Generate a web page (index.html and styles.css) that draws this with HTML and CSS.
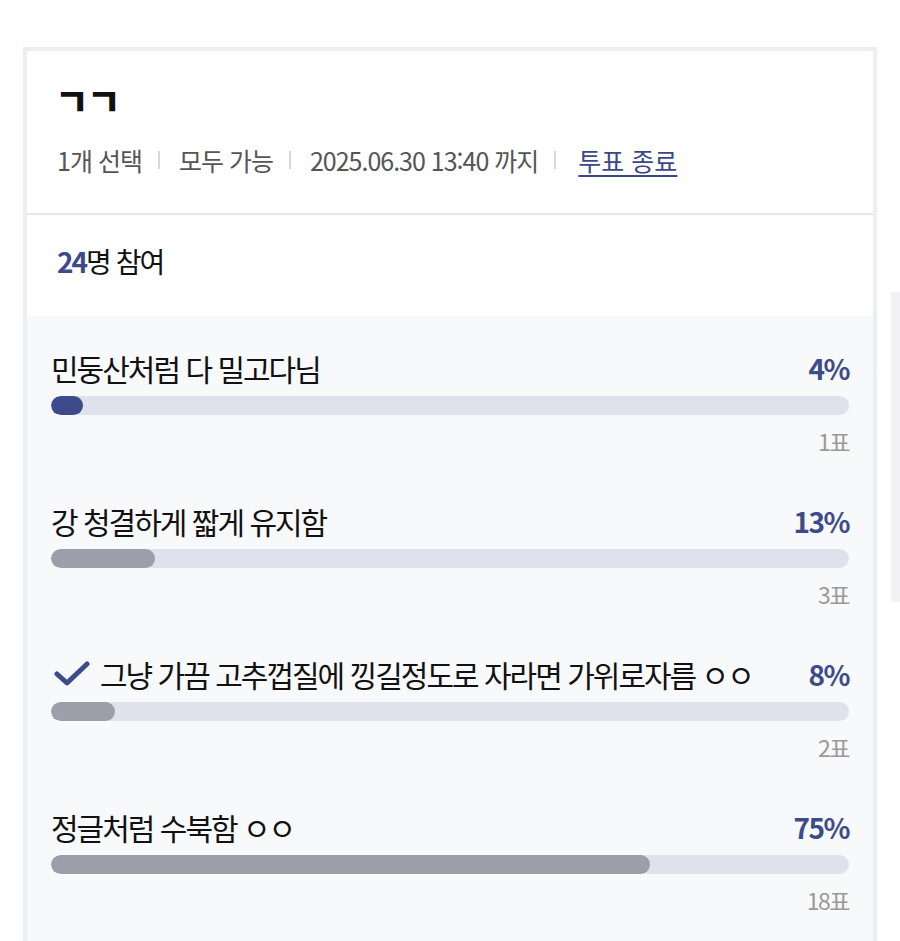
FILE: index.html
```html
<!DOCTYPE html>
<html lang="ko">
<head>
<meta charset="utf-8">
<title>투표</title>
<link rel="stylesheet" href="styles.css">
</head>
<body>
<div class="page">
  <div class="card">
    <div class="head">
      <h2 class="title">ㄱㄱ</h2>
      <div class="meta">
        <span>1개 선택</span><i class="sep"></i><span>모두 가능</span><i class="sep"></i><span>2025.06.30 13:40 까지</span><i class="sep"></i><a class="end">투표 종료</a>
      </div>
    </div>
    <div class="joined"><b>24</b>명 참여</div>
    <div class="options">
      <div class="opt">
        <div class="opt-top"><span class="label">민둥산처럼 다 밀고다님</span><span class="pct">4%</span></div>
        <div class="track"><div class="fill navy" style="width:4%"></div></div>
        <div class="votes">1표</div>
      </div>
      <div class="opt">
        <div class="opt-top"><span class="label">강 청결하게 짧게 유지함</span><span class="pct">13%</span></div>
        <div class="track"><div class="fill" style="width:13%"></div></div>
        <div class="votes">3표</div>
      </div>
      <div class="opt">
        <div class="opt-top"><span class="label"><svg class="check" viewBox="0 0 36 26" width="36" height="26"><path d="M3 13 L13 22 L33 3" fill="none" stroke="#3d4a8c" stroke-width="5" stroke-linecap="round" stroke-linejoin="round"/></svg>그냥 가끔 고추껍질에 낑길정도로 자라면 가위로자름 ㅇㅇ</span><span class="pct">8%</span></div>
        <div class="track"><div class="fill" style="width:8%"></div></div>
        <div class="votes">2표</div>
      </div>
      <div class="opt">
        <div class="opt-top"><span class="label">정글처럼 수북함 ㅇㅇ</span><span class="pct">75%</span></div>
        <div class="track"><div class="fill" style="width:75%"></div></div>
        <div class="votes">18표</div>
      </div>
    </div>
  </div>
  <div class="side"></div>
</div>
</body>
</html>
```
FILE: styles.css
```css
html, body {
  margin: 0;
  padding: 0;
  overflow: hidden;
  background: #ffffff;
}
body {
  font-family: "Noto Sans CJK KR", "Noto Sans", sans-serif;
  color: #111111;
}
.page {
  display: flex;
  align-items: flex-start;
  padding: 47px 0 0 23px;
  width: 1200px;
}
.card {
  flex: none;
  width: 846px;
  border: 4px solid #eceef3;
  border-bottom: none;
  min-height: 1000px;
  background: #f8f9fb;
}
.head {
  background: #fff;
  padding: 29px 30px 36px;
  border-bottom: 2px solid #e6e7eb;
}
.title {
  margin: 0 0 0 -2px;
  font-size: 37px;
  line-height: 40px;
  font-weight: 900;
  letter-spacing: -2px;
}
.meta {
  margin-top: 23px;
  display: flex;
  align-items: center;
  font-size: 25px;
  line-height: 34px;
  color: #555;
  letter-spacing: -1px;
}
.sep {
  display: block;
  width: 2px;
  height: 18px;
  background: #d6d7db;
  margin: 0 19px 0 16px;
}
.end {
  color: #3b4888;
  text-decoration: underline;
  text-decoration-thickness: 2px;
  text-underline-offset: 4px;
  letter-spacing: 0;
  margin-left: 3px;
}
.joined {
  background: #fff;
  padding: 29px 30px 38px;
  font-size: 28px;
  line-height: 34px;
  letter-spacing: -2px;
}
.joined b {
  color: #3d4a8c;
  font-weight: 700;
}
.options {
  padding: 34px 24px 0;
}
.opt {
  margin-bottom: 47px;
}
.opt-top {
  display: flex;
  justify-content: space-between;
  align-items: center;
  font-size: 30px;
  line-height: 36px;
  letter-spacing: -2px;
}
.label {
  display: flex;
  align-items: center;
}
.check {
  margin: 0 10px 0 3px;
}
.pct {
  color: #3d4a8c;
  font-weight: 700;
  font-size: 28px;
  letter-spacing: -1.5px;
}
.track {
  margin-top: 10px;
  height: 19px;
  border-radius: 10px;
  background: #dfe1ec;
  overflow: hidden;
}
.fill {
  height: 100%;
  border-radius: 10px;
  background: #9c9fa9;
}
.fill.navy {
  background: #3d4a8c;
}
.votes {
  margin-top: 11px;
  text-align: right;
  font-size: 23px;
  line-height: 30px;
  color: #9a9a9a;
  letter-spacing: -1.5px;
}
.side {
  flex: none;
  margin-left: 14px;
  margin-top: 245px;
  width: 300px;
  height: 310px;
  background: #f2f2f4;
}
```
